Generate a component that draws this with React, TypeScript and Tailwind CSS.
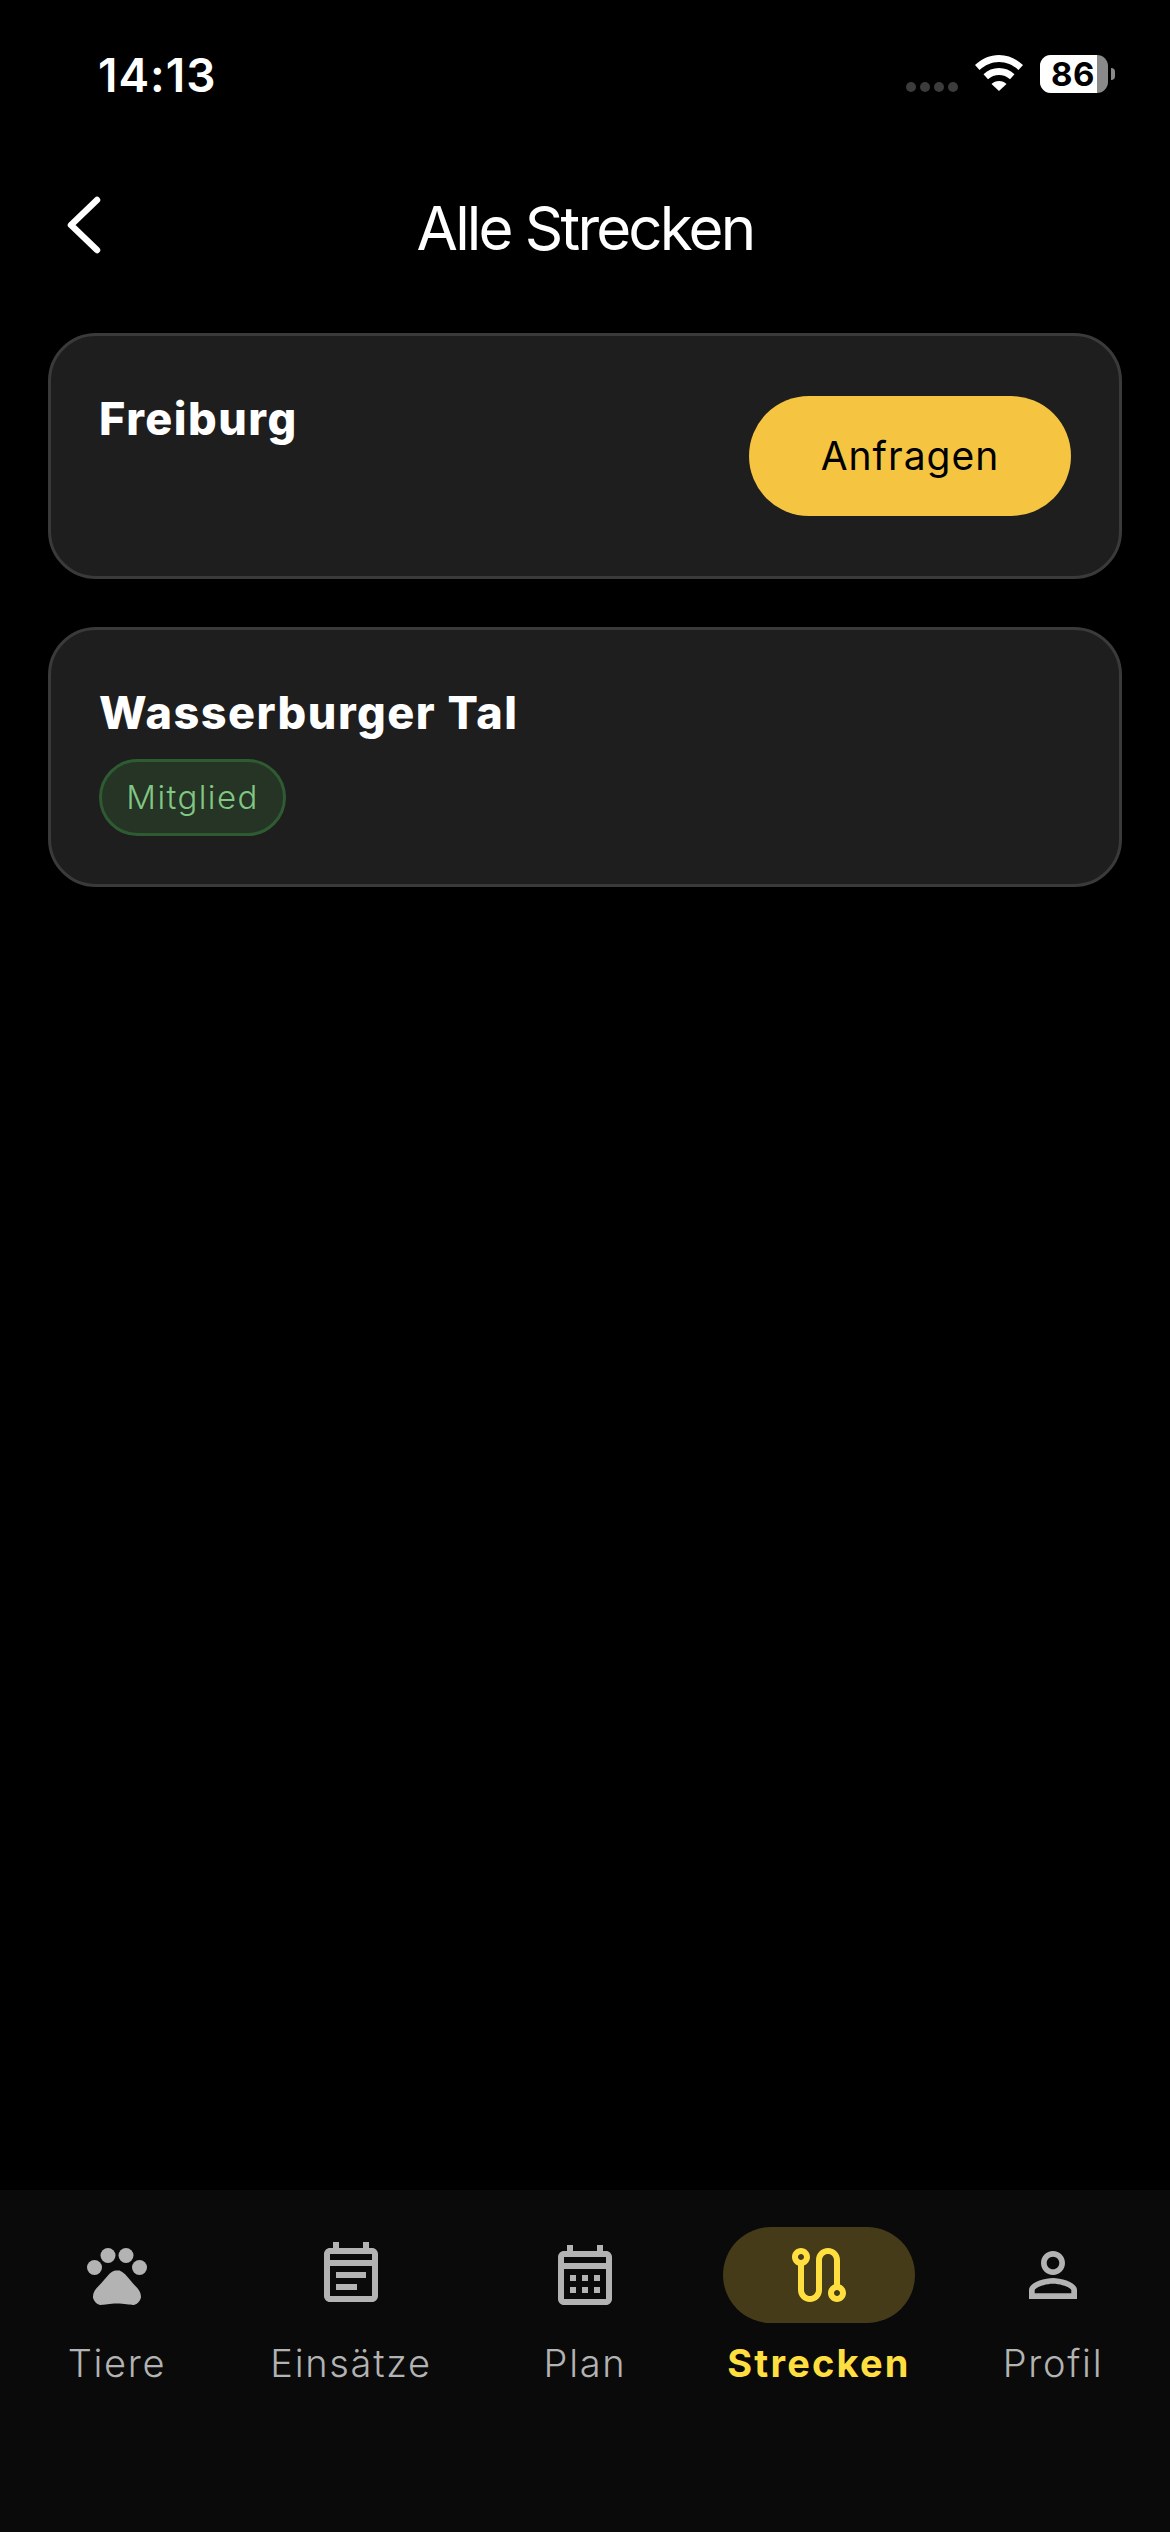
import React from "react";

const sans = "font-['Inter','Noto_Sans',sans-serif]";

const icons = {
  paw: (
    <>
      <circle cx="4.5" cy="9.5" r="2.5" />
      <circle cx="9" cy="5.5" r="2.5" />
      <circle cx="15" cy="5.5" r="2.5" />
      <circle cx="19.5" cy="9.5" r="2.5" />
      <path d="M17.34 14.86c-.87-1.02-1.6-1.89-2.48-2.91-.46-.54-1.05-1.08-1.75-1.32-.11-.04-.22-.07-.33-.09-.25-.04-.52-.04-.78-.04s-.53 0-.79.05c-.11.02-.22.05-.33.09-.7.24-1.28.78-1.75 1.32-.87 1.02-1.6 1.89-2.48 2.91-1.31 1.31-2.92 2.76-2.62 4.79.29 1.02 1.02 2.03 2.33 2.32.73.15 3.06-.44 5.54-.44h.18c2.48 0 4.81.58 5.54.44 1.31-.29 2.04-1.31 2.33-2.32.31-2.04-1.3-3.49-2.61-4.8z" />
    </>
  ),
  note: (
    <path
      fillRule="evenodd"
      d="M19 3h-1V1h-2v2H8V1H6v2H5c-1.1 0-2 .9-2 2v14c0 1.1.9 2 2 2h14c1.1 0 2-.9 2-2V5c0-1.1-.9-2-2-2zm0 16H5V9h14v10zm0-12H5V5h14v2zM17 13H7v-2h10v2zm-3 4H7v-2h7v2z"
    />
  ),
  calendar: (
    <path
      fillRule="evenodd"
      d="M19 4h-1V2h-2v2H8V2H6v2H5c-1.11 0-1.99.9-1.99 2L3 20c0 1.1.89 2 2 2h14c1.1 0 2-.9 2-2V6c0-1.1-.9-2-2-2zm0 16H5V10h14v10zm0-12H5V6h14v2zM9 14H7v-2h2v2zm4 0h-2v-2h2v2zm4 0h-2v-2h2v2zm-8 4H7v-2h2v2zm4 0h-2v-2h2v2zm4 0h-2v-2h2v2z"
    />
  ),
  route: (
    <path d="M19 15.18V7c0-2.21-1.79-4-4-4s-4 1.79-4 4v10c0 1.1-.9 2-2 2s-2-.9-2-2V8.82C8.16 8.4 9 7.3 9 6c0-1.66-1.34-3-3-3S3 4.34 3 6c0 1.3.84 2.4 2 2.82V17c0 2.21 1.79 4 4 4s4-1.79 4-4V7c0-1.1.9-2 2-2s2 .9 2 2v8.18c-1.16.41-2 1.51-2 2.82 0 1.66 1.34 3 3 3s3-1.34 3-3c0-1.3-.84-2.4-2-2.82zM6 7c-.55 0-1-.45-1-1s.45-1 1-1 1 .45 1 1-.45 1-1 1zm12 12c-.55 0-1-.45-1-1s.45-1 1-1 1 .45 1 1-.45 1-1 1z" />
  ),
  person: (
    <path d="M12 5.9c1.16 0 2.1.94 2.1 2.1s-.94 2.1-2.1 2.1S9.9 9.16 9.9 8s.94-2.1 2.1-2.1m0 9c2.97 0 6.1 1.46 6.1 2.1v1.1H5.9V17c0-.64 3.13-2.1 6.1-2.1M12 4C9.79 4 8 5.79 8 8s1.79 4 4 4 4-1.79 4-4-1.79-4-4-4zm0 9c-2.67 0-8 1.34-8 4v3h16v-3c0-2.66-5.33-4-8-4z" />
  ),
};

const tabs = [
  { label: "Tiere", icon: icons.paw },
  { label: "Einsätze", icon: icons.note },
  { label: "Plan", icon: icons.calendar },
  { label: "Strecken", icon: icons.route, active: true },
  { label: "Profil", icon: icons.person },
];

function StatusBar() {
  return (
    <div className="flex h-[120px] items-start justify-between pt-[50px] pr-[55px] pl-[98px]">
      <span className="text-[46px] leading-[50px] font-semibold tracking-[1px] text-white">14:13</span>
      <div className="mt-[5px] flex h-[38px] items-start">
        <div className="mt-[27px] flex gap-[4px]">
          <span className="h-[10px] w-[10px] rounded-full bg-[#3c3c3c]" />
          <span className="h-[10px] w-[10px] rounded-full bg-[#3c3c3c]" />
          <span className="h-[10px] w-[10px] rounded-full bg-[#3c3c3c]" />
          <span className="h-[10px] w-[10px] rounded-full bg-[#3c3c3c]" />
        </div>
        <svg className="ml-[17px]" width="48" height="36" viewBox="0 0 48 36" fill="#fff">
          <path d="M24 0C15 0 7 3.5 0 10l4.5 5C10 10 16.500 7 24 7s14 3 19.500 8L48 10C41 3.500 33 0 24 0z" />
          <path d="M24 13c-6 0-11 2.200-15.500 6.300l4.500 5C16 21.500 20 20 24 20s8 1.500 11 4.300l4.500-5C35 15.200 30 13 24 13z" />
          <path d="M24 26c-3 0-5.500 1-7.500 3L24 36l7.500-7c-2-2-4.500-3-7.500-3z" />
        </svg>
        <div className="ml-[17px] flex h-[38px] w-[68px] overflow-hidden rounded-[11px] bg-[#8a8a8a]">
          <div className="flex h-full w-[57px] items-center justify-end bg-white pr-[2px] text-[33px] leading-none font-bold tracking-[0.5px] text-black">
            86
          </div>
        </div>
        <div className="mt-[13px] ml-[3px] h-[12px] w-[4px] rounded-r-full bg-[#8a8a8a]" />
      </div>
    </div>
  );
}

function Card({ children }: { children: React.ReactNode }) {
  return <div className="rounded-[48px] border-[3px] border-[#3a3a3a] bg-[#1e1e1e] p-[48px]">{children}</div>;
}

function CardTitle({ children }: { children: string }) {
  return <h2 className="text-[45px] leading-[70px] font-extrabold tracking-[1.5px] text-white">{children}</h2>;
}

export default function App() {
  return (
    <div className={`flex h-[2532px] w-full flex-col bg-black ${sans}`}>
      <StatusBar />

      <header className="relative flex h-[213px] items-start justify-center pt-[72px]">
        <svg className="absolute top-[75px] left-[64px]" width="40" height="60" viewBox="0 0 40 60" fill="none" stroke="#fff" strokeWidth="6.500" strokeLinecap="round" strokeLinejoin="round">
          <path d="M33 5L7 30l26 25" />
        </svg>
        <h1 className="text-[60px] leading-[72px] font-normal tracking-[-2.8px] text-white">Alle Strecken</h1>
      </header>

      <main className="flex flex-col gap-[48px] px-[48px]">
        <Card>
          <div className="flex items-start justify-between">
            <CardTitle>Freiburg</CardTitle>
            <button className="my-[12px] flex h-[120px] w-[322px] items-center justify-center rounded-full bg-[#f5c542] text-[39px] font-normal tracking-[1px] text-black">
              Anfragen
            </button>
          </div>
        </Card>
        <Card>
          <CardTitle>Wasserburger Tal</CardTitle>
          <span className="mt-[11px] flex h-[77px] w-[187px] items-center justify-center rounded-full border-[3px] border-[#2e5b32] bg-[#253425] text-[33px] font-light tracking-[1.4px] text-[#81c784]">
            Mitglied
          </span>
        </Card>
      </main>

      <nav className="mt-auto flex h-[342px] bg-[#0a0a0a] pt-[37px]">
        {tabs.map((tab) => (
          <div key={tab.label} className="flex flex-1 flex-col items-center">
            <div className={`flex h-[96px] w-[192px] items-center justify-center rounded-full ${tab.active ? "bg-[#453b18]" : ""}`}>
              <svg width="72" height="72" viewBox="0 0 24 24" fill={tab.active ? "#ffdf40" : "#b3b3b3"}>
                {tab.icon}
              </svg>
            </div>
            <span className={`mt-[16px] text-[38px] leading-[48px] ${tab.active ? "font-bold tracking-[2.2px] text-[#ffdf40]" : "font-light tracking-[1.7px] text-[#b3b3b3]"}`}>
              {tab.label}
            </span>
          </div>
        ))}
      </nav>
    </div>
  );
}
